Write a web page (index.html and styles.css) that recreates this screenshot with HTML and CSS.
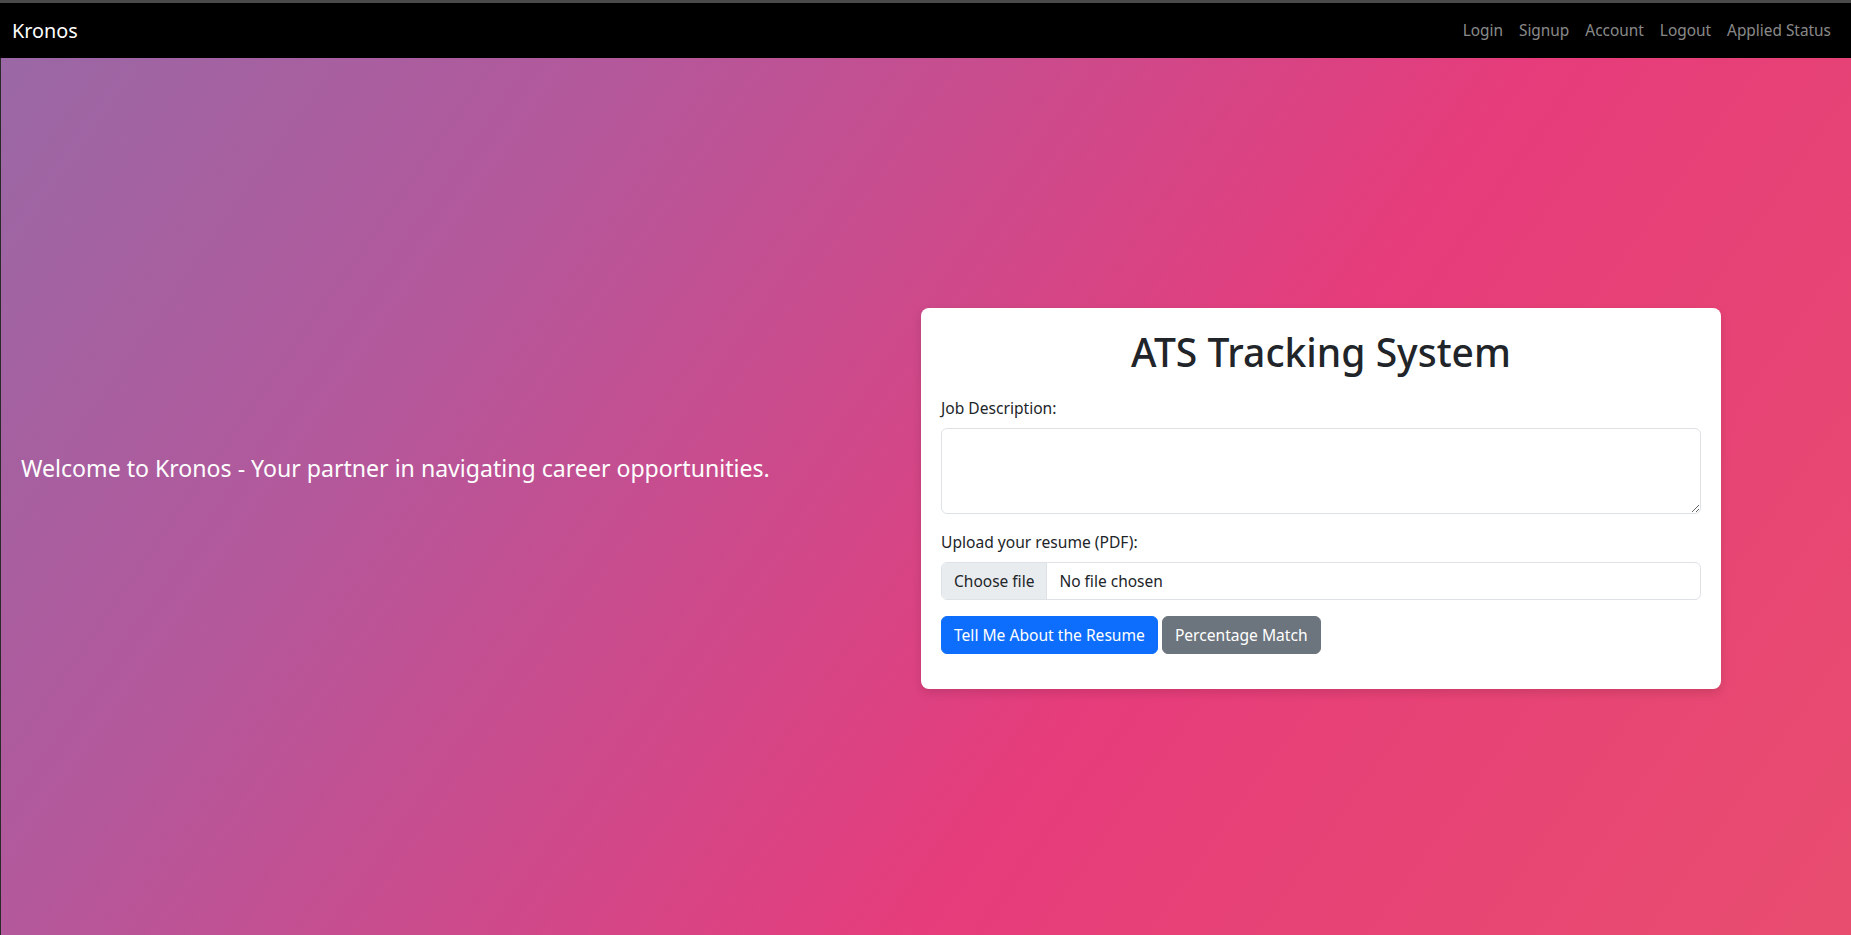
FILE: index.html
```html
<!DOCTYPE html>
<html lang="en">
<head>
<meta charset="utf-8">
<title>Kronos - ATS Tracking System</title>
<link rel="stylesheet" href="styles.css">
</head>
<body>
<nav class="navbar">
  <a class="brand" href="#">Kronos</a>
  <ul class="nav-links">
    <li><a href="#">Login</a></li>
    <li><a href="#">Signup</a></li>
    <li><a href="#">Account</a></li>
    <li><a href="#">Logout</a></li>
    <li><a href="#">Applied Status</a></li>
  </ul>
</nav>
<main class="hero">
  <section class="intro">
    <p class="welcome">Welcome to Kronos - Your partner in navigating career opportunities.</p>
  </section>
  <section class="card">
    <h1 class="card-title">ATS Tracking System</h1>
    <form class="ats-form">
      <div class="field">
        <label class="form-label" for="jd">Job Description:</label>
        <textarea id="jd" class="form-control" rows="3"></textarea>
      </div>
      <div class="field">
        <label class="form-label" for="resume">Upload your resume (PDF):</label>
        <label class="file-control" for="resume">
          <span class="file-button">Choose file</span>
          <span class="file-name">No file chosen</span>
          <input id="resume" class="file-hidden" type="file" accept="application/pdf">
        </label>
      </div>
      <div class="actions">
        <button type="button" class="btn btn-primary">Tell Me About the Resume</button>
        <button type="button" class="btn btn-secondary">Percentage Match</button>
      </div>
    </form>
  </section>
</main>
</body>
</html>
```

FILE: styles.css
```css
* { box-sizing: border-box; }

html, body {
  margin: 0;
  padding: 0;
}

body {
  font-family: "Noto Sans", "Open Sans", sans-serif;
  font-size: 16px;
  line-height: 1.5;
  color: #212529;
  background: #000;
  overflow: hidden;
}

.navbar {
  display: flex;
  align-items: center;
  justify-content: space-between;
  height: 58px;
  border-top: 3px solid #4a4a4a;
  background: #000;
  padding: 0 12px;
}

.brand {
  color: #fff;
  text-decoration: none;
  font-size: 19.8px;
  line-height: 30px;
}

.nav-links {
  display: flex;
  list-style: none;
  margin: 0;
  padding: 0;
}

.nav-links a {
  display: block;
  padding: 8px 8px;
  color: rgba(255, 255, 255, 0.55);
  text-decoration: none;
  font-size: 15.4px;
}

.hero {
  height: calc(100vh - 58px);
  display: grid;
  grid-template-columns: 920px 800px;
  align-items: center;
  border-left: 1px solid #2a2a2a;
  background: linear-gradient(125deg, #9a68a5 0%, #b3589b 25%, #e63c7b 62%, #e84d6e 100%);
}

.intro {
  padding-left: 20px;
}

.welcome {
  margin: 0 0 58px;
  color: #fff;
  font-size: 23.1px;
  line-height: 36px;
}

.card {
  background: #fff;
  border-radius: 8px;
  padding: 20px;
  box-shadow: 0 4px 10px rgba(0, 0, 0, 0.12);
  margin-top: 4px;
}

.card-title {
  margin: 0 0 20px;
  text-align: center;
  font-size: 39px;
  font-weight: 500;
  line-height: 48px;
}

.ats-form {
  margin-bottom: 15px;
}

.field {
  margin-bottom: 16px;
}

.form-label {
  display: block;
  margin-bottom: 8px;
  font-size: 15.6px;
  line-height: 24px;
}

.form-control {
  display: block;
  width: 100%;
  padding: 6px 12px;
  font-family: inherit;
  font-size: 15.5px;
  line-height: 24px;
  color: #212529;
  background: #fff;
  border: 1px solid #dee2e6;
  border-radius: 6px;
}

textarea.form-control {
  height: 86px;
  resize: vertical;
}

.file-control {
  display: flex;
  align-items: stretch;
  height: 38px;
  border: 1px solid #dee2e6;
  border-radius: 6px;
  overflow: hidden;
  font-size: 15.5px;
  line-height: 24px;
  cursor: pointer;
}

.file-button {
  display: flex;
  align-items: center;
  padding: 0 12px;
  background: #e9ecef;
  border-right: 1px solid #dee2e6;
}

.file-name {
  display: flex;
  align-items: center;
  padding: 0 12px;
}

.file-hidden {
  display: none;
}

.actions {
  display: flex;
  gap: 4px;
}

.btn {
  font-family: inherit;
  font-size: 15.6px;
  line-height: 24px;
  padding: 6px 12px;
  border: 1px solid transparent;
  border-radius: 6px;
  color: #fff;
  cursor: pointer;
}

.btn-primary {
  background: #0d6efd;
  border-color: #0d6efd;
}

.btn-secondary {
  background: #6c757d;
  border-color: #6c757d;
}
```
